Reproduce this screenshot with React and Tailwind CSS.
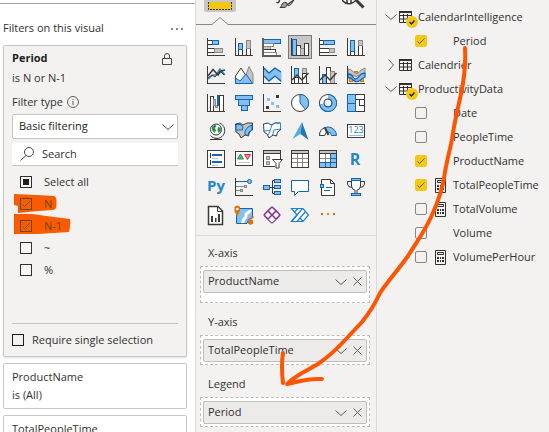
import React from "react";

const DARK = "#3b3a39";
const BLUE = "#0f67b5";
const SKY = "#86bfee";
const GREY = "#c6c4c2";
const MID = "#8a8886";

/* One outlined bar of a chart icon, on whole pixels. */
function Bar({ x, y, w, h, fill = "#fff", stroke = DARK }) {
  return <rect x={x + 0.5} y={y + 0.5} width={w - 1} height={h - 1} fill={fill} stroke={stroke} shapeRendering="crispEdges" />;
}
function Axis() {
  return <path d="M0.5 0V17.5H18" fill="none" stroke={DARK} shapeRendering="crispEdges" />;
}
function Line({ d, c = DARK, f = "none", w = 1 }) {
  return <path d={d} fill={f} stroke={c} strokeWidth={w} />;
}

const VISUALS = [
  ["Stacked bar chart", <><Bar x={0} y={2} w={6} h={5} /><Bar x={5} y={2} w={7} h={5} fill={SKY} stroke={BLUE} /><Bar x={0} y={10} w={8} h={5} /><Bar x={7} y={10} w={9} h={5} fill={GREY} stroke={MID} /><Axis /></>],
  ["Stacked column chart", <><Bar x={3} y={11} w={5} h={7} /><Bar x={3} y={5} w={5} h={7} fill={SKY} stroke={BLUE} /><Bar x={11} y={10} w={5} h={8} /><Bar x={11} y={2} w={5} h={9} fill={GREY} stroke={MID} /><Axis /></>],
  ["Clustered bar chart", <><Bar x={0} y={1} w={18} h={5} fill={SKY} stroke={BLUE} /><Bar x={0} y={5} w={11} h={4} stroke={MID} /><Bar x={0} y={8} w={8} h={4} fill={GREY} stroke={MID} /><Bar x={0} y={11} w={13} h={4} stroke={DARK} /><Bar x={0} y={14} w={14} h={4} stroke={MID} /><Line d="M0 0V18H18" w={2} c="#605e5c" /></>],
  ["Clustered column chart", <><Bar x={1} y={1} w={5} h={17} fill={SKY} stroke={BLUE} /><Bar x={5} y={7} w={5} h={11} /><Bar x={9} y={10} w={5} h={8} fill={GREY} stroke={MID} /><Bar x={13} y={5} w={5} h={13} stroke={DARK} /><Line d="M0.5 0V17.5H18" w={1} /></>],
  ["100% stacked bar chart", <><Bar x={0} y={2} w={5} h={5} /><Bar x={4} y={2} w={12} h={5} fill={SKY} stroke={BLUE} /><Bar x={0} y={10} w={11} h={5} /><Bar x={10} y={10} w={6} h={5} fill={GREY} stroke={MID} /><Axis /></>],
  ["100% stacked column chart", <><Bar x={3} y={12} w={5} h={6} /><Bar x={3} y={2} w={5} h={12} fill={SKY} stroke={BLUE} /><Bar x={11} y={7} w={5} h={11} /><Bar x={11} y={2} w={5} h={6} fill={GREY} stroke={MID} /><Axis /></>],

  ["Line chart", <><Line d="M1 13L6 9L9 9L13 3L18 9" c="#2b88c9" w={1.5} /><Line d="M1 10L6 3.5L11 9L14 5L18 4" w={1.5} /><Line d="M1 12L5 9L8 11L13 5L17 9" c={DARK} /><Axis /></>],
  ["Area chart", <><Line d="M8 17.5L14 0.5L18 8V17.5Z" f={GREY} c={MID} /><Line d="M0.5 17.5V10L6 2L16 17.5Z" f="#fff" /><Line d="M0.5 17.5V12L5 15L11 8L17.5 17.5Z" f={SKY} c={BLUE} /></>],
  ["Stacked area chart", <><Line d="M1 2L6 7L12 2L18 6V16L12 10L6 15L1 10Z" f={SKY} c={SKY} /><Line d="M1 2L6 7L12 2L18 6" c={BLUE} w={1.3} /><Line d="M1 10L6 15L12 10L18 15" c={BLUE} w={1.3} /><Axis /></>],
  ["Line and stacked column chart", <><Bar x={3} y={2} w={5} h={10} fill={SKY} stroke={BLUE} /><Bar x={3} y={11} w={5} h={7} /><Bar x={11} y={2} w={5} h={6} fill={GREY} stroke={MID} /><Bar x={11} y={7} w={5} h={11} /><Line d="M1 14L6 9L11 14L17.500 7" w={1.4} /><Axis /></>],
  ["Line and clustered column chart", <><Bar x={3} y={8} w={5} h={10} fill={SKY} stroke={BLUE} /><Bar x={7} y={1} w={5} h={17} /><Bar x={11} y={5} w={5} h={13} fill={GREY} stroke={MID} /><Line d="M1 14L6 9L11 14L17.500 7" w={1.4} /><Axis /></>],
  ["Ribbon chart", <><Bar x={2} y={11} w={4} h={5} fill="#f2a154" stroke="#d9730d" /><Bar x={13} y={11} w={4} h={5} fill="#f2a154" stroke="#d9730d" /><Bar x={7} y={5} w={4} h={5} fill="#f2a154" stroke="#d9730d" /><Line d="M1 3Q4 3 6 5.500T10 7.500T14 4L18 2V6Q14 9 9 10.500Q4 9 1 7Z" f={GREY} c={MID} /><Line d="M1 8Q4 8 6 11T10 12.500T14 8L18 7V11Q15 12 13 14.500Q9 17 6 14Q4 11 1 12Z" f={SKY} c={BLUE} w={1.3} /><Axis /></>],

  ["Waterfall chart", <><Bar x={3} y={2} w={4} h={16} /><Bar x={6} y={5} w={3} h={7} fill={GREY} stroke={MID} /><Bar x={8} y={11} w={3} h={3} fill={GREY} stroke={MID} /><Bar x={10} y={1} w={3} h={11} fill={BLUE} stroke={BLUE} /><Bar x={12} y={1} w={5} h={17} /><Axis /></>],
  ["Funnel", <><Bar x={0} y={1} w={18} h={5} fill={SKY} stroke={BLUE} /><Bar x={3} y={5} w={12} h={7} fill={SKY} stroke={BLUE} /><Bar x={6} y={11} w={7} h={6} fill={SKY} stroke={BLUE} /></>],
  ["Scatter chart", <><rect x="13" y="1" width="3" height="3" fill={DARK} /><rect x="4" y="4" width="3" height="3" fill={SKY} /><rect x="8" y="8" width="3" height="3" fill={SKY} /><rect x="3" y="12" width="3" height="3" fill={DARK} /><rect x="13" y="11" width="3" height="3" fill={SKY} /><Axis /></>],
  ["Pie chart", <><circle cx="9" cy="9" r="8.500" fill="#fff" stroke={DARK} /><Line d="M9 .5A8.500 8.500 0 0 1 14.500 15.500L9 9Z" f={SKY} c={BLUE} /></>],
  ["Donut chart", <><circle cx="9" cy="9" r="6.250" fill="none" stroke={DARK} strokeWidth="5.500" /><circle cx="9" cy="9" r="6.250" fill="none" stroke="#fff" strokeWidth="3.500" /><path d="M9 2.750A6.250 6.250 0 1 1 2.800 10" fill="none" stroke={BLUE} strokeWidth="5.500" /><path d="M9 2.750A6.250 6.250 0 1 1 2.900 10" fill="none" stroke={SKY} strokeWidth="3.500" /></>],
  ["Treemap", <><Bar x={8} y={0} w={10} h={18} /><Bar x={8} y={0} w={10} h={6} /><Bar x={12} y={5} w={6} h={7} /><Bar x={0} y={0} w={9} h={10} fill={SKY} stroke={BLUE} /><Bar x={0} y={9} w={9} h={9} fill={SKY} stroke={BLUE} /></>],

  ["Map", <><circle cx="9" cy="7.500" r="5.500" fill="#fff" stroke={DARK} /><path d="M5 4.500L8 2.500L9.500 4L8 6L9 8.500L7.500 11L5 8ZM11 5L13.500 5.500L14 9L11.500 11L10.500 8Z" fill="#2f8f4e" /><Line d="M12.500 1A8 8 0 1 1 3.500 13.500M9 15.500V17.500M3 17.500H15" /></>],
  ["Filled map", <><path d="M0.500 2L5 1L8 3L12 1H17.500V8L14.500 10L13.500 14L10 13L6 16L4 12L1 10Z" fill={GREY} stroke={DARK} /><path d="M1 2.500H5L8 4.500L7.500 8H1ZM10 9L13 5L17 3V8L14 10L13 13.500L10 12.500Z" fill={SKY} stroke={BLUE} /></>],
  ["Shape map", <><path d="M0.500 2L5 1L8 3L12 1H17.500V8L14.500 10L13.500 14L10 13L6 16L4 12L1 10Z" fill="#fff" stroke={DARK} /><path d="M1 9L7 8.500L9 3L12 1H17.500V7L11 8L9.500 13M5 13L7.500 8.500" fill="none" stroke="#2490d6" /></>],
  ["Azure map", <><path d="M11 0L1.500 17L9.500 12Z" fill="#54aee0" /><path d="M11 0L17.500 18L9.500 12Z" fill="#2178b5" /></>],
  ["Gauge", <><path d="M0.500 13.500A8.500 8.500 0 0 1 17.500 13.500H12.500A3.500 3.500 0 0 0 5.500 13.500Z" fill={SKY} stroke={BLUE} /><path d="M0.500 13.500A8.500 8.500 0 0 1 6 5.500L7.500 10L5.500 13.500Z" fill="#fff" stroke={DARK} /><Line d="M6 6L9.500 13" w={2} /></>],
  ["Card", <><Bar x={0} y={2} w={18} h={14} /><text x="9" y="11" textAnchor="middle" fontSize="9" fill="#1b7fc4" fontFamily="Open Sans, sans-serif">123</text><Line d="M2 13.500H16" c={SKY} /></>],

  ["Multi-row card", <><Bar x={0} y={0} w={18} h={18} /><Line d="M3.500 3V8M3.500 10V15" c={DARK} /><Line d="M5 5H15M5 12H15" c={BLUE} w={2} /><Line d="M5 8.500H11M5 15.500H11" c={GREY} /></>],
  ["KPI", <><Bar x={0} y={1} w={18} h={15} /><path d="M2.500 9L5.500 4L8.500 9Z" fill="#62b17b" stroke="#2f8f4e" /><path d="M9.500 4.500H15.500L12.500 9.500Z" fill="#ef8c8c" stroke="#d13438" /><Line d="M3 12.500H15" c={GREY} /></>],
  ["Slicer", <><Bar x={0} y={0} w={18} h={17} /><Bar x={0} y={0} w={18} h={4} fill={GREY} /><Bar x={3} y={6} w={4} h={4} fill={GREY} stroke={MID} /><Bar x={3} y={11} w={4} h={4} fill={GREY} stroke={MID} /><rect x="12" y="10" width="8" height="9" fill="#f3f2f1" /><path d="M9.500 9.500H19.500L16 13.500V18H13V13.500Z" fill="#fff" stroke={DARK} /></>],
  ["Table", <><Bar x={0} y={0} w={18} h={18} /><Line d="M6.500 4V17M11.500 4V17M1 8.500H17M1 12.500H17" c={MID} /><Bar x={0} y={0} w={18} h={4} fill={GREY} /></>],
  ["Matrix", <><Bar x={0} y={0} w={18} h={18} /><rect x="12" y="4" width="5" height="13" fill={SKY} /><rect x="1" y="13" width="16" height="4" fill={SKY} /><Line d="M6.500 4V12M1 8.500H12" c={MID} /><Line d="M11.500 4V17M1 12.500H17M6.500 13V17M12 8.500H17" c={BLUE} /><Bar x={0} y={0} w={18} h={4} fill={GREY} /></>],
  ["R script visual", <text x="8" y="15" textAnchor="middle" fontSize="16" fontWeight="700" fill="#2488c8" fontFamily="Open Sans, sans-serif">R</text>],

  ["Python visual", <text x="9" y="13" textAnchor="middle" fontSize="15" fontWeight="700" fill="#2488c8" fontFamily="Open Sans, sans-serif">Py</text>],
  ["Key influencers", <><Line d="M1 3.500H13" c={BLUE} /><circle cx="14.500" cy="3.500" r="2" fill={SKY} stroke={BLUE} /><Line d="M1 8.500H9M1 12.500H5" c={MID} /><Bar x={9} y={7} w={3} h={3} fill={GREY} stroke={MID} /><Bar x={5} y={11} w={3} h={3} fill={GREY} stroke={MID} /><Axis /></>],
  ["Decomposition tree", <><Line d="M6 9.500H12M12 2.500H9.500V15.500H12" /><Bar x={0} y={7} w={7} h={5} fill={SKY} stroke={BLUE} /><Bar x={11} y={1} w={7} h={4} fill={SKY} stroke={BLUE} /><Bar x={11} y={7} w={7} h={4} fill={SKY} stroke={BLUE} /><Bar x={11} y={13} w={7} h={4} fill={SKY} stroke={BLUE} /></>],
  ["Q&A", <Line d="M0.500 2.500H17.500V13.500H7.500L3.500 17.500V13.500H0.500Z" f="#fff" c={BLUE} />],
  ["Narrative", <><Line d="M2.500 1.500H11.500L15.500 5.500V17.500H2.500Z" f="#fff" /><Line d="M11.500 1.500V5.500H15.500" /><Bar x={1} y={6} w={4} h={4} fill={SKY} stroke={BLUE} /><Line d="M7 9.500H13M5 12.500H11" c={BLUE} /></>],
  ["Metrics", <><Line d="M4.500 3.500H0.500V6Q1 9.500 5 9.500M13.500 3.500H17.500V6Q17 9.500 13 9.500" /><Line d="M4.500 1.500H13.500V8Q13 12 10 12V16H8V12Q5 12 4.500 8Z" f="#fff" /><Bar x={4} y={0} w={10} h={3} fill={SKY} stroke={BLUE} /><Bar x={4} y={15} w={10} h={3} fill={SKY} stroke={BLUE} /></>],

  ["Paginated report", <><Line d="M1.500 0.500H11L15.500 5V18.500H1.500Z" f="#fff" w={1.5} /><Line d="M10.500 0.500V5.500H15.500" /><path d="M4 10H6V16H4ZM8 12H9.500V16H8ZM11 8H13V16H11Z" fill={DARK} /></>],
  ["ArcGIS map", <><path d="M1.500 2.500H17.500V12Q13 12 12 17.500H1.500Z" fill={SKY} stroke={BLUE} /><path d="M8 17C7 12 12 13 11 9.500C10.500 6 15 8 15 4" fill="none" stroke="#fff" strokeWidth="3" /><path d="M2 10.500L-0.500 5V1Q2 -2 5 1V5Z" fill="#d9730d" /><circle cx="2.300" cy="3" r="1.300" fill="#fff" /><circle cx="15.500" cy="16" r="2.700" fill="#d9730d" /><circle cx="17.500" cy="11" r="1.300" fill="#d9730d" /></>],
  ["Power Apps", <g fill="#fff" stroke="#8a3a94" strokeWidth="1.200"><rect x="3" y="3" width="12" height="12" rx="2" transform="rotate(45 9 9)" /><path d="M5 5L13 13M13 5L5 13M9 1L13 5L9 9L5 5Z" fill="none" /><path d="M5 5L9 9L5 13L1 9ZM13 5L17 9L13 13L9 9Z" fill="none" /></g>],
  ["Power Automate", <g fill="#fff" stroke="#1b7fd6" strokeWidth="1.200"><path d="M0.500 2.500H12L17.500 9L12 15.500H0.500L6 9Z" /><path d="M0.500 15.500L11.500 2.500M6 15.500L14.500 5.500M3.500 6L7 2.500M12 15.500L9 12" fill="none" /></g>],
  ["Get more visuals", <><rect x="2" y="7" width="2" height="2" fill="#d9730d" /><rect x="8" y="7" width="2" height="2" fill="#c98a3d" /><rect x="14" y="7" width="2" height="2" fill="#d9730d" /></>],
];

function Chevron({ className = "", dir = "down" }) {
  return (
    <svg className={className} width="12" height="12" viewBox="0 0 12 12" fill="none" stroke="currentColor" aria-hidden="true">
      <path d={dir === "down" ? "M0.500 3.500L6 8.500L11.500 3.500" : "M3.500 0.500L8.500 6L3.500 11.500"} />
    </svg>
  );
}

function Check({ id, look, checked, mixed }) {
  return (
    <span className="grid size-3 shrink-0 place-items-center">
      <input
        id={id}
        type="checkbox"
        defaultChecked={checked}
        className={"col-start-1 row-start-1 size-3 appearance-none border " + look}
      />
      {mixed && <span className="pointer-events-none col-start-1 row-start-1 size-1.5 bg-[#201f1e]" />}
      {checked && !mixed && (
        <svg className="pointer-events-none col-start-1 row-start-1 text-[#605e1c]" width="12" height="12" viewBox="0 0 12 12" fill="none" stroke="currentColor" aria-hidden="true">
          <path d="M2.500 6.500L4.500 8.500L9.500 3.500" />
        </svg>
      )}
    </span>
  );
}

const VALUES = [
  { label: "Select all", mixed: true, checked: true },
  { label: "N", checked: true, marked: true },
  { label: "N-1", checked: true, marked: true },
  { label: "~" },
  { label: "%" },
];

function Filters() {
  return (
    <section className="min-w-0 overflow-hidden bg-white pt-[3px]">
      <div className="flex h-[42px] items-center justify-between border-t border-[#a6a6a6] pt-2 pr-3 pl-[3px]">
        <h2>Filters on this visual</h2>
        <button aria-label="More options" className="flex gap-[3px]">
          <i className="size-0.5 bg-[#8a8886]" />
          <i className="size-0.5 bg-[#8a8886]" />
          <i className="size-0.5 bg-[#8a8886]" />
        </button>
      </div>

      <div className="mr-2 ml-[3px] rounded-xs border border-[#c8c6c4] bg-[#f3f2f1] shadow-sm">
        <div className="flex flex-col px-2 pt-[3px]">
          <div className="flex h-[19px] items-center justify-between pr-1.5">
            <h3 className="font-bold text-[#201f1e]">Period</h3>
            <svg width="10" height="12" viewBox="0 0 10 12" fill="none" stroke="#484644" aria-hidden="true">
              <path d="M0.500 5.500H9.500V11.500H0.500ZM2.500 5.500V3Q2.500 0.500 5 0.500T7.500 3V5.500" />
            </svg>
          </div>
          <p className="h-[19px] leading-[19px]">is N or N-1</p>
          <div className="mt-[5px] flex h-5 items-center gap-1">
            <label htmlFor="filter-type">Filter type</label>
            <svg width="12" height="12" viewBox="0 0 12 12" fill="none" stroke="#605e5c" aria-hidden="true">
              <circle cx="6" cy="6" r="5.500" />
              <path d="M6 5V9M6 3V4" />
            </svg>
          </div>
          <div className="mt-0.5 grid h-[25px] items-center">
            <select id="filter-type" className="col-start-1 row-start-1 h-full w-full appearance-none rounded-xs border border-[#c8c6c4] bg-white pl-1.5 text-[#252423]">
              <option>Basic filtering</option>
            </select>
            <Chevron className="pointer-events-none col-start-1 row-start-1 mr-1 justify-self-end text-[#484644]" />
          </div>
          <label className="mt-1 flex h-[23px] items-center gap-2 border-b border-[#c8c6c4] bg-white pl-2">
            <svg className="shrink-0" width="14" height="14" viewBox="0 0 14 14" fill="none" stroke="#484644" aria-hidden="true">
              <circle cx="9" cy="5" r="4.500" />
              <path d="M6 8.500L0.500 13.500" />
            </svg>
            <input type="search" aria-label="Search" placeholder="Search" className="w-full min-w-0 bg-transparent outline-none placeholder:text-[#323130]" />
          </label>

          <ul className="relative mt-[5px] pl-2">
            <svg className="absolute top-5 left-0.5" width="60" height="44" viewBox="0 0 60 44" fill="#f95a02" aria-hidden="true">
              <path d="M0 3L22 4L40 5Q43 6 42.500 12Q43 19 39 19L24 20L4 22V15L0 14Z" />
              <path d="M-1 23H18L40 26L56 28Q57 33 55 41L24 43H0V35H-1Z" />
            </svg>
            {VALUES.map((v, i) => (
              <li key={v.label} className="relative flex h-[22px] items-center gap-3">
                <Check id={"value-" + i} checked={v.checked} mixed={v.mixed} look={v.marked ? "border-[#6b4a00]" : "border-[#323130] bg-white/40"} />
                <label htmlFor={"value-" + i} className={v.marked ? "text-[#6b4a00]" : ""}>{v.label}</label>
              </li>
            ))}
          </ul>

          <div className="mt-[42px] flex h-[33px] items-center gap-2 border-t border-[#c8c6c4]">
            <Check id="single" look="border-[#201f1e]" />
            <label htmlFor="single" className="whitespace-nowrap">Require single selection</label>
          </div>
        </div>
      </div>

      <div className="mt-1.5 mr-2 ml-[3px] rounded-xs border border-[#c8c6c4] bg-white px-2 py-1 leading-[18px]">
        <h3>ProductName</h3>
        <p>is (All)</p>
      </div>
      <div className="mt-1.5 mr-2 ml-[3px] rounded-xs border border-[#c8c6c4] bg-white px-2 pt-1 pb-6 leading-[18px]">
        <h3>TotalPeopleTime</h3>
      </div>
    </section>
  );
}

function Well({ label, field, roomy }) {
  return (
    <div className="mr-1.5 ml-1">
      <h3 className="mb-1 pl-2 leading-[18px]">{label}</h3>
      <div className={"border border-dashed border-[#bebbb8] bg-white px-0.5 pt-[3px] " + (roomy ? "pb-[9px]" : "pb-0.5")}>
        <div className="flex h-[23px] items-center gap-1.5 rounded-xs border border-[#c0bebc] bg-[#edebe9] pr-1 pl-1">
          <span className="flex-1 whitespace-nowrap">{field}</span>
          <button aria-label={"Options for " + field}><Chevron className="text-[#605e5c]" /></button>
          <button aria-label={"Remove " + field}>
            <svg width="9" height="9" viewBox="0 0 9 9" stroke="#605e5c" aria-hidden="true">
              <path d="M0.500 0.500L8.500 8.500M8.500 0.500L0.500 8.500" />
            </svg>
          </button>
        </div>
      </div>
    </div>
  );
}

function Visualizations() {
  return (
    <section className="min-w-0 overflow-hidden border-l border-[#dddbd9]">
      <div className="flex h-[17px] items-start pl-2">
        <button aria-label="Build visual" className="h-3 w-8 rounded-b-xs bg-[#c8c6c4] px-1">
          <svg className="block" width="24" height="8" viewBox="0 0 24 8" aria-hidden="true">
            <rect width="24" height="8" fill="#f2c811" />
            <path d="M0.500 0V7.500H23.500V0" fill="none" stroke="#323130" strokeDasharray="2 1" />
          </svg>
        </button>
        <button aria-label="Format visual" className="ml-10">
          <svg className="block" width="20" height="9" viewBox="0 0 20 9" fill="none" stroke={DARK} aria-hidden="true">
            <path d="M0.500 2Q3 4 3.500 0M18 0L11 5" strokeWidth="1.500" />
            <path d="M4 7.500Q6 6 6 4Q8 1 11 3Q12 7 8 7.500Z" fill="#a19f9d" />
            <path d="M12 6Q16 5 17 1" />
          </svg>
        </button>
        <button aria-label="Analytics" className="ml-[46px]">
          <svg className="block" width="23" height="9" viewBox="0 0 23 9" fill="none" stroke={DARK} aria-hidden="true">
            <path d="M0 0Q4 5 9 3.500Q13 2 14 0M5 0V3M9 0V3" strokeWidth="1.500" />
            <path d="M14 0L21.500 7.500" strokeWidth="3" />
          </svg>
        </button>
      </div>
      <div className="flex h-2 items-end">
        <div className="w-4 border-b border-[#8a8886]" />
        <svg width="16" height="8" viewBox="0 0 16 8" fill="none" stroke="#8a8886" aria-hidden="true">
          <path d="M0 7.500L8 0.500L16 7.500" />
        </svg>
        <div className="flex-1 border-b border-[#8a8886]" />
      </div>

      <div className="mt-[13px] ml-[11px] grid w-max grid-cols-6 gap-2.5">
        {VISUALS.map(([name, art], i) => (
          <button key={name} aria-label={name} className={i === 3 ? "-m-[3px] border border-[#7a7876] bg-[#c8c6c4] p-0.5" : ""}>
            <svg className="block overflow-visible" width="18" height="18" viewBox="0 0 18 18" aria-hidden="true">{art}</svg>
          </button>
        ))}
      </div>

      <div className="mt-[11px] flex flex-col gap-2.5 border-t border-[#dddbd9] pt-2">
        <Well label="X-axis" field="ProductName" roomy />
        <Well label="Y-axis" field="TotalPeopleTime" />
        <Well label="Legend" field="Period" />
      </div>
    </section>
  );
}

function TableIcon({ used }) {
  return (
    <svg className="shrink-0 overflow-visible" width="13" height="12" viewBox="0 0 13 12" aria-hidden="true">
      <path d="M0.500 0.500H12.500V11.500H0.500ZM0.500 4.500H12.500M0.500 8H12.500M4.500 3V11.500M8.500 3V11.500" fill="none" stroke="#323130" />
      <path d="M0 0H13V2H0Z" fill="#323130" />
      {used && (
        <>
          <circle cx="13" cy="11" r="6" fill="#f2c811" />
          <path d="M10.500 11L12.500 13L15.500 9.500" fill="none" stroke="#252423" strokeWidth="1.500" />
        </>
      )}
    </svg>
  );
}

function CalcIcon() {
  return (
    <svg width="11" height="15" viewBox="0 0 11 15" aria-hidden="true">
      <path d="M0.500 0.500H10.500V14.500H0.500ZM2.500 2.500H8.500V4.500H2.500Z" fill="none" stroke="#323130" />
      <path d="M2 7H4V9H2ZM5 7H6V9H5ZM7 7H9V9H7ZM2 10H4V12H2ZM5 10H6V12H5ZM7 10H9V12H7Z" fill="#323130" />
    </svg>
  );
}

const MODEL = [
  { table: "CalendarIntelligence", open: true, fields: [{ name: "Period", on: true }] },
  { table: "Calendrier", open: false, fields: [] },
  {
    table: "ProductivityData",
    open: true,
    fields: [
      { name: "Date" },
      { name: "PeopleTime" },
      { name: "ProductName", on: true },
      { name: "TotalPeopleTime", on: true, calc: true },
      { name: "TotalVolume", calc: true },
      { name: "Volume" },
      { name: "VolumePerHour", calc: true },
    ],
  },
];

function Fields() {
  return (
    <section className="min-w-0 overflow-hidden border-l border-[#dddbd9] pt-[5px] whitespace-nowrap">
      {MODEL.map((t) => (
        <div key={t.table}>
          <button className="flex h-6 items-center pl-2" aria-expanded={t.open}>
            <Chevron dir={t.open ? "down" : "right"} className="mr-0.5 text-[#605e5c]" />
            <TableIcon used={t.open} />
            <span className="ml-1.5">{t.table}</span>
          </button>
          {t.fields.map((f) => (
            <div key={f.name} className="flex h-6 items-center pl-[38px]">
              <Check id={t.table + f.name} checked={f.on} look={f.on ? "rounded-xs border-[#f2c811] bg-[#f2c811]" : "rounded-xs border-[#8a8886]"} />
              <span className="mr-1.5 ml-2 w-3">{f.calc && <CalcIcon />}</span>
              <label htmlFor={t.table + f.name}>{f.name}</label>
            </div>
          ))}
        </div>
      ))}
    </section>
  );
}

export default function App() {
  return (
    <main className="relative grid h-screen grid-cols-[195fr_181fr_173fr] overflow-hidden bg-[#f3f2f1] font-['Open_Sans','Noto_Sans',sans-serif] text-[11px] text-[#323130]">
      <Filters />
      <Visualizations />
      <Fields />
      <svg className="pointer-events-none absolute top-0 left-0" width="549" height="432" viewBox="0 0 549 432" fill="none" stroke="#ff5500" strokeWidth="4" strokeLinecap="round" strokeLinejoin="round" aria-hidden="true">
        <path d="M465 48C466 66 464 80 461 94C458 108 454 124 452 139C450 150 447 160 445 172C443 188 438 202 432 215C425 231 418 240 408 256C398 270 388 281 380 293C375 304 370 312 362 322L347 338C338 348 328 357 318 364C308 370 294 376 287 384C298 382 306 378 322 379" />
        <path d="M283 353Q281 366 283 383" />
      </svg>
    </main>
  );
}
